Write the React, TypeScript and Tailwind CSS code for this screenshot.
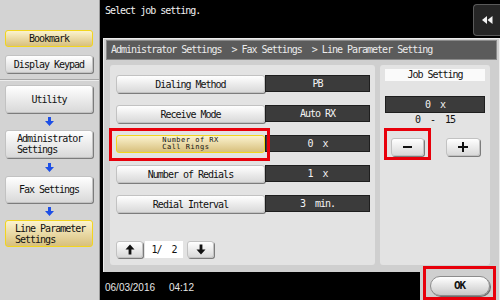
import type { ReactNode } from "react";
import clsx from "clsx";

const mono = "font-['DejaVu_Sans_Mono','Liberation_Mono',monospace] text-[10px] tracking-[-1px]";

const rows = [
  { label: "Dialing Method", value: "PB" },
  { label: "Receive Mode", value: "Auto RX" },
  { label: "Number of RX|Call Rings", value: "0  x", active: true },
  { label: "Number of Redials", value: "1  x" },
  { label: "Redial Interval", value: "3  min." },
];

function Key({
  children,
  active,
  className,
}: {
  children: ReactNode;
  active?: boolean;
  className?: string;
}) {
  return (
    <div
      className={clsx(
        "flex items-center rounded-[3px] text-[#111]",
        active
          ? "border-[1.5px] border-[#f2d51e] bg-gradient-to-b from-[#fbf3cf] to-[#d8c07c]"
          : "border border-[#c2c2c2] bg-gradient-to-b from-[#ffffff] to-[#d9d9d9] shadow-[1px_1px_0_#7c7c7c]",
        className
      )}
    >
      {children}
    </div>
  );
}

function BlueArrow() {
  return (
    <svg width="9" height="9" viewBox="0 0 9 9">
      <path d="M3 0h3v4h3L4.5 9 0 4h3z" fill="#1d4fe6" />
    </svg>
  );
}

function PageArrow({ up }: { up?: boolean }) {
  return (
    <svg width="10" height="11" viewBox="0 0 10 11" className={up ? "" : "rotate-180"}>
      <path d="M5 0.5 9.5 5.5H6.4V10.5H3.6V5.5H0.5z" fill="#111" />
    </svg>
  );
}

export default function App() {
  return (
    <div className={clsx("relative flex h-[300px] w-[500px] overflow-hidden bg-black", mono)}>
      {/* side menu */}
      <aside className="flex h-full w-[100px] flex-col border-r border-[#9a9a9a] bg-[#d3d3d3]">
        <div className="flex h-[79px] flex-col gap-[8px] px-[5px] pt-[30px]">
          <Key active className="h-[17px] w-[88px] justify-center">Bookmark</Key>
          <Key className="h-[18px] w-[88px] justify-center">Display Keypad</Key>
        </div>
        <div className="h-[2px] border-t border-b border-t-[#a6a6a6] border-b-[#ececec]" />
        <div className="flex flex-col px-[5px] pt-[4px]">
          <Key className="h-[28px] w-[88px] justify-center">Utility</Key>
          <div className="flex h-[17px] items-center justify-center">
            <BlueArrow />
          </div>
          <Key className="h-[28px] w-[88px] pl-[11px] leading-[11px]">
            Administrator
            <br />
            Settings
          </Key>
          <div className="flex h-[18px] items-center justify-center">
            <BlueArrow />
          </div>
          <Key className="h-[27px] w-[88px] justify-center">Fax Settings</Key>
          <div className="flex h-[17px] items-center justify-center">
            <BlueArrow />
          </div>
          <Key active className="h-[27px] w-[88px] pl-[9px] leading-[11px]">
            Line Parameter
            <br />
            Settings
          </Key>
        </div>
      </aside>

      <div className="flex flex-1 flex-col pl-[3px]">
        {/* top bar */}
        <div className="flex h-[38px] items-start justify-between">
          <span className="pl-[2px] pt-[3px] text-[#f2f2f2]">Select job setting.</span>
          <div className="mt-[4px] flex h-[32px] w-[27px] items-center justify-center rounded-l-[4px] border border-r-0 border-[#5a5a5a] bg-[#262626]">
            <svg width="11" height="8" viewBox="0 0 11 8">
              <path d="M0 4 5 0v8zM5.5 4l5-4v8z" fill="#f4f4f4" />
            </svg>
          </div>
        </div>

        {/* main frame */}
        <div className="flex h-[234px] flex-col border-l border-t border-r border-[#ececec] bg-[#cfcfcf] px-[2px] pt-[1px]">
          <div className="h-[20px] whitespace-pre border border-[#8a8a8a] bg-[#5b5b5b] pl-[4px] leading-[18px] text-[#ececec]">
            Administrator Settings  &gt; Fax Settings  &gt; Line Parameter Setting
          </div>
          <div className="flex gap-[5px] pl-[4px] pt-[5px]">
            {/* list */}
            <div className="flex h-[200px] w-[265px] flex-col rounded-[3px] bg-[#e3e3e3] pb-[7px] pl-[6px] pt-[10px]">
              <div className="flex flex-col gap-[12px]">
                {rows.map((row) => (
                  <div key={row.label} className="flex h-[18px] items-stretch">
                    <Key active={row.active} className="w-[149px] justify-center">
                      {row.label.includes("|") ? (
                        <span className="whitespace-pre text-[7px] leading-[7px] tracking-[0.5px]">
                          {row.label.split("|")[0]}
                          <br />
                          {row.label.split("|")[1]}
                        </span>
                      ) : (
                        row.label
                      )}
                    </Key>
                    <div className="flex h-[17px] w-[105px] items-center justify-center whitespace-pre border border-[#1e1e1e] bg-[#3b3b3b] text-[#f4f4f4]">
                      {row.value}
                    </div>
                  </div>
                ))}
              </div>
              <div className="mt-auto flex h-[17px] items-stretch gap-[2px]">
                <Key className="w-[27px] justify-center">
                  <PageArrow up />
                </Key>
                <div className="flex w-[38px] items-center justify-center whitespace-pre bg-white text-[#111]">1/  2</div>
                <Key className="ml-[2px] w-[27px] justify-center">
                  <PageArrow />
                </Key>
              </div>
            </div>

            {/* job setting */}
            <div className="flex h-[200px] w-[110px] flex-col items-center rounded-[3px] bg-[#e3e3e3] pt-[4px]">
              <div className="h-[12px] w-[100px] bg-[#fafafa] text-center leading-[12px] text-[#111]">Job Setting</div>
              <div className="mt-[15px] flex h-[17px] w-[100px] items-center justify-center whitespace-pre border border-[#1e1e1e] bg-[#3b3b3b] text-[#f4f4f4]">
                0  x
              </div>
              <div className="mt-[1px] whitespace-pre leading-[12px] text-[#111]">0  -  15</div>
              <div className="mt-[12px] flex gap-[22px]">
                <Key className="h-[18px] w-[33px] justify-center">
                  <span className="block h-[2px] w-[9px] bg-[#111]" />
                </Key>
                <Key className="h-[18px] w-[34px] justify-center">
                  <svg width="10" height="10" viewBox="0 0 10 10">
                    <path d="M4 0h2v4h4v2H6v4H4V6H0V4h4z" fill="#111" />
                  </svg>
                </Key>
              </div>
            </div>
          </div>
        </div>

        {/* bottom */}
        <div className="flex flex-1">
          <div className="flex-1 pl-[2px] pt-[8px] font-['Liberation_Sans',Arial,sans-serif] text-[10px] tracking-normal text-[#e6e6e6]">
            <span className="whitespace-pre">06/03/2016     04:12</span>
          </div>
          <div className="flex w-[80px] items-start justify-center border-r border-[#ececec] bg-[#cfcfcf] pt-[4px]">
            <div className="flex h-[20px] w-[60px] items-center justify-center rounded-full border border-[#8c8c8c] bg-gradient-to-b from-[#ffffff] to-[#c9c9c9] text-[11px] font-bold text-[#111] shadow-[1px_1px_0_#6e6e6e]">
              OK
            </div>
          </div>
        </div>
      </div>

      {/* highlight marks */}
      <div className="absolute left-[109px] top-[128px] h-[33px] w-[161px] border-[3px] border-[#e8000b]" />
      <div className="absolute left-[384px] top-[128px] h-[32px] w-[47px] border-[3px] border-[#e8000b]" />
      <div className="absolute left-[423px] top-[266px] h-[34px] w-[73px] border-[3px] border-[#e8000b]" />
    </div>
  );
}
